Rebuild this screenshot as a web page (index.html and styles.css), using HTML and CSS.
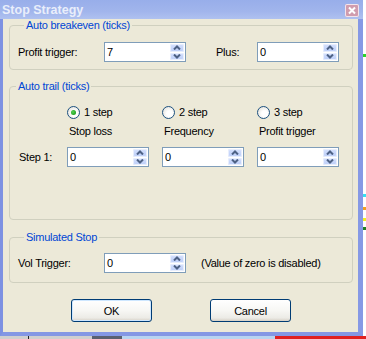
FILE: index.html
```html
<!DOCTYPE html>
<html>
<head>
<meta charset="utf-8">
<link rel="stylesheet" href="styles.css">
</head>
<body>
<div class="screen">
  <div class="top">
    <div class="window">
      <div class="titlebar">
        <span class="title">Stop Strategy</span>
        <span class="close">
          <svg width="14" height="13" viewBox="0 0 14 13"><path d="M4 3.5 L10 9.5 M10 3.5 L4 9.5" stroke="#fff" stroke-width="2" fill="none"/></svg>
        </span>
      </div>
      <div class="client">
        <fieldset class="group g1">
          <legend>Auto breakeven (ticks)</legend>
          <div class="row1">
            <span class="lbl l-profit">Profit trigger:</span>
            <div class="spin"><span class="val">7</span><span class="btns"><span class="up"><svg width="8" height="5" viewBox="0 0 8 5"><path d="M1 4.5 L4 1.5 L7 4.5" stroke="#4D6185" stroke-width="2" fill="none"/></svg></span><span class="dn"><svg width="8" height="5" viewBox="0 0 8 5"><path d="M1 0.5 L4 3.5 L7 0.5" stroke="#4D6185" stroke-width="2" fill="none"/></svg></span></span></div>
            <span class="lbl l-plus">Plus:</span>
            <div class="spin"><span class="val">0</span><span class="btns"><span class="up"><svg width="8" height="5" viewBox="0 0 8 5"><path d="M1 4.5 L4 1.5 L7 4.5" stroke="#4D6185" stroke-width="2" fill="none"/></svg></span><span class="dn"><svg width="8" height="5" viewBox="0 0 8 5"><path d="M1 0.5 L4 3.5 L7 0.5" stroke="#4D6185" stroke-width="2" fill="none"/></svg></span></span></div>
          </div>
        </fieldset>

        <fieldset class="group g2">
          <legend>Auto trail (ticks)</legend>
          <div class="trail">
            <span class="cell"></span>
            <span class="radio"><span class="circle on"><span class="dot"></span></span>1 step</span>
            <span class="radio"><span class="circle"></span>2 step</span>
            <span class="radio"><span class="circle"></span>3 step</span>

            <span class="cell"></span>
            <span class="colhead">Stop loss</span>
            <span class="colhead">Frequency</span>
            <span class="colhead">Profit trigger</span>

            <span class="steplbl">Step 1:</span>
            <div class="spin"><span class="val">0</span><span class="btns"><span class="up"><svg width="8" height="5" viewBox="0 0 8 5"><path d="M1 4.5 L4 1.5 L7 4.5" stroke="#4D6185" stroke-width="2" fill="none"/></svg></span><span class="dn"><svg width="8" height="5" viewBox="0 0 8 5"><path d="M1 0.5 L4 3.5 L7 0.5" stroke="#4D6185" stroke-width="2" fill="none"/></svg></span></span></div>
            <div class="spin"><span class="val">0</span><span class="btns"><span class="up"><svg width="8" height="5" viewBox="0 0 8 5"><path d="M1 4.5 L4 1.5 L7 4.5" stroke="#4D6185" stroke-width="2" fill="none"/></svg></span><span class="dn"><svg width="8" height="5" viewBox="0 0 8 5"><path d="M1 0.5 L4 3.5 L7 0.5" stroke="#4D6185" stroke-width="2" fill="none"/></svg></span></span></div>
            <div class="spin"><span class="val">0</span><span class="btns"><span class="up"><svg width="8" height="5" viewBox="0 0 8 5"><path d="M1 4.5 L4 1.5 L7 4.5" stroke="#4D6185" stroke-width="2" fill="none"/></svg></span><span class="dn"><svg width="8" height="5" viewBox="0 0 8 5"><path d="M1 0.5 L4 3.5 L7 0.5" stroke="#4D6185" stroke-width="2" fill="none"/></svg></span></span></div>
          </div>
        </fieldset>

        <fieldset class="group g3">
          <legend>Simulated Stop</legend>
          <div class="row3">
            <span class="lbl l-vol">Vol Trigger:</span>
            <div class="spin"><span class="val">0</span><span class="btns"><span class="up"><svg width="8" height="5" viewBox="0 0 8 5"><path d="M1 4.5 L4 1.5 L7 4.5" stroke="#4D6185" stroke-width="2" fill="none"/></svg></span><span class="dn"><svg width="8" height="5" viewBox="0 0 8 5"><path d="M1 0.5 L4 3.5 L7 0.5" stroke="#4D6185" stroke-width="2" fill="none"/></svg></span></span></div>
            <span class="lbl l-note">(Value of zero is disabled)</span>
          </div>
        </fieldset>

        <div class="buttons">
          <button class="btn default">OK</button>
          <button class="btn">Cancel</button>
        </div>
      </div>
    </div>
    <div class="rightstrip">
      <span class="px p1"></span><span class="px p2"></span><span class="px p3"></span><span class="px p4"></span><span class="px p5"></span>
    </div>
  </div>
  <div class="bottomstrip">
    <span class="bs a"></span><span class="bs b"></span><span class="bs c"></span><span class="bs d"></span><span class="bs e"></span><span class="bs f"></span>
  </div>
</div>
</body>
</html>
```

FILE: styles.css
```css
* { box-sizing: border-box; }
html, body { margin: 0; padding: 0; }
body {
  width: 366px;
  height: 339px;
  overflow: hidden;
  font-family: "Liberation Sans", Arial, sans-serif;
  font-size: 11px;
  letter-spacing: -0.25px;
  color: #000;
  background: #fff;
}
.screen { width: 366px; height: 339px; display: flex; flex-direction: column; }
.top { display: flex; height: 336px; }
.window {
  width: 363px;
  height: 336px;
  display: flex;
  flex-direction: column;
  border-left: 3px solid #7D91E2;
  border-right: 5px solid #8699E5;
  border-bottom: 4px solid #8497E4;
}
.titlebar {
  height: 19px;
  margin-left: -3px;
  margin-right: -5px;
  padding-left: 2px;
  padding-right: 4px;
  display: flex;
  align-items: center;
  justify-content: space-between;
  background: linear-gradient(to bottom, #98AEEA 0%, #A1B5EC 60%, #AFC1F0 100%);
}
.title {
  font-size: 12.5px;
  font-weight: bold;
  letter-spacing: 0;
  color: #E9EEFB;
  padding-top: 1px;
}
.close {
  width: 14px;
  height: 13px;
  display: flex;
  border-radius: 2px;
  background: #D09CAE;
  box-shadow: inset 0 0 0 1px #F2E4EC;
  margin-top: 1px;
}
.client {
  flex: 1;
  background: #ECE9D8;
  padding: 0 5px 0 6px;
  display: flex;
  flex-direction: column;
}
.group {
  margin: 0;
  border: 1px solid #D0D0BF;
  border-radius: 4px;
  padding: 0;
  min-width: 0;
}
.group legend {
  color: #0046D5;
  line-height: 13px;
  padding: 0 2px;
  margin-left: 6px;
}
.g1 { padding: 10px 0 7px 8px; }
.g2 { margin-top: 10px; padding: 13px 0 52px 0; }
.g3 { margin-top: 11px; padding: 9px 0 9px 8px; }

.row1, .row3 { display: flex; align-items: center; height: 20px; }
.l-profit, .l-vol { width: 86px; }
.l-plus { margin-left: 30px; width: 41px; }
.l-note { margin-left: 15px; }

.spin {
  width: 82px;
  height: 20px;
  border: 1px solid #7F9DB9;
  background: #fff;
  display: flex;
  align-items: stretch;
  padding: 1px;
}
.spin .val { flex: 1; padding-left: 1px; line-height: 17px; }
.btns {
  width: 14px;
  display: flex;
  flex-direction: column;
  gap: 1px;
}
.btns span {
  flex: 1;
  display: flex;
  align-items: center;
  justify-content: center;
  border-radius: 2px;
  background: linear-gradient(to bottom, #D4E0FD, #BBCDF8);
  box-shadow: inset 0 0 0 1px #E8EEFD;
}

.trail {
  display: grid;
  grid-template-columns: 44px 82px 82px 82px;
  grid-template-rows: 13px 19px 29px;
  column-gap: 13px;
  align-items: end;
}
.radio { display: flex; align-items: center; height: 13px; gap: 4px; line-height: 13px; }
.circle {
  width: 13px;
  height: 13px;
  border-radius: 50%;
  border: 1px solid #1C5180;
  background: radial-gradient(circle at 60% 60%, #FFFFFF 30%, #DCDAD2 100%);
  display: flex;
  align-items: center;
  justify-content: center;
}
.dot {
  width: 5px;
  height: 5px;
  border-radius: 50%;
  background: radial-gradient(circle at 40% 40%, #55D455, #21A121 70%);
}
.colhead { padding-left: 2px; line-height: 13px; }
.steplbl { padding-left: 9px; align-self: end; line-height: 20px; }

.buttons {
  margin-top: 16px;
  display: flex;
  justify-content: center;
  gap: 58px;
}
.btn {
  width: 81px;
  height: 23px;
  padding: 0;
  font-family: "Liberation Sans", Arial, sans-serif;
  font-size: 11px;
  letter-spacing: -0.25px;
  color: #000;
  border: 1px solid #003C74;
  border-radius: 3px;
  background: linear-gradient(to bottom, #FFFFFF 0%, #F7F7F4 50%, #ECEBE6 85%, #D6D0C5 100%);
}
.btn.default { box-shadow: inset 0 0 0 1px #CEE7FF; }

.rightstrip { width: 3px; height: 336px; display: flex; flex-direction: column; background: #fff; }
.px { display: block; height: 3px; }
.p1 { background: #2BD52B; margin-top: 54px; }
.p2 { background: #37E0F0; margin-top: 137px; }
.p3 { background: #F0A020; margin-top: 10px; }
.p4 { background: #F0F020; margin-top: 8px; }
.p5 { background: #208020; margin-top: 6px; }

.bottomstrip { height: 3px; display: flex; background: #CFCFCF; }
.bs { display: block; height: 3px; }
.bs.a { width: 28px; }
.bs.b { width: 1px; background: #222; }
.bs.c { width: 63px; }
.bs.d { width: 30px; background: #5A6070; }
.bs.e { width: 153px; background: #B8D4F0; }
.bs.f { flex: 1; background: #E02020; }
```
